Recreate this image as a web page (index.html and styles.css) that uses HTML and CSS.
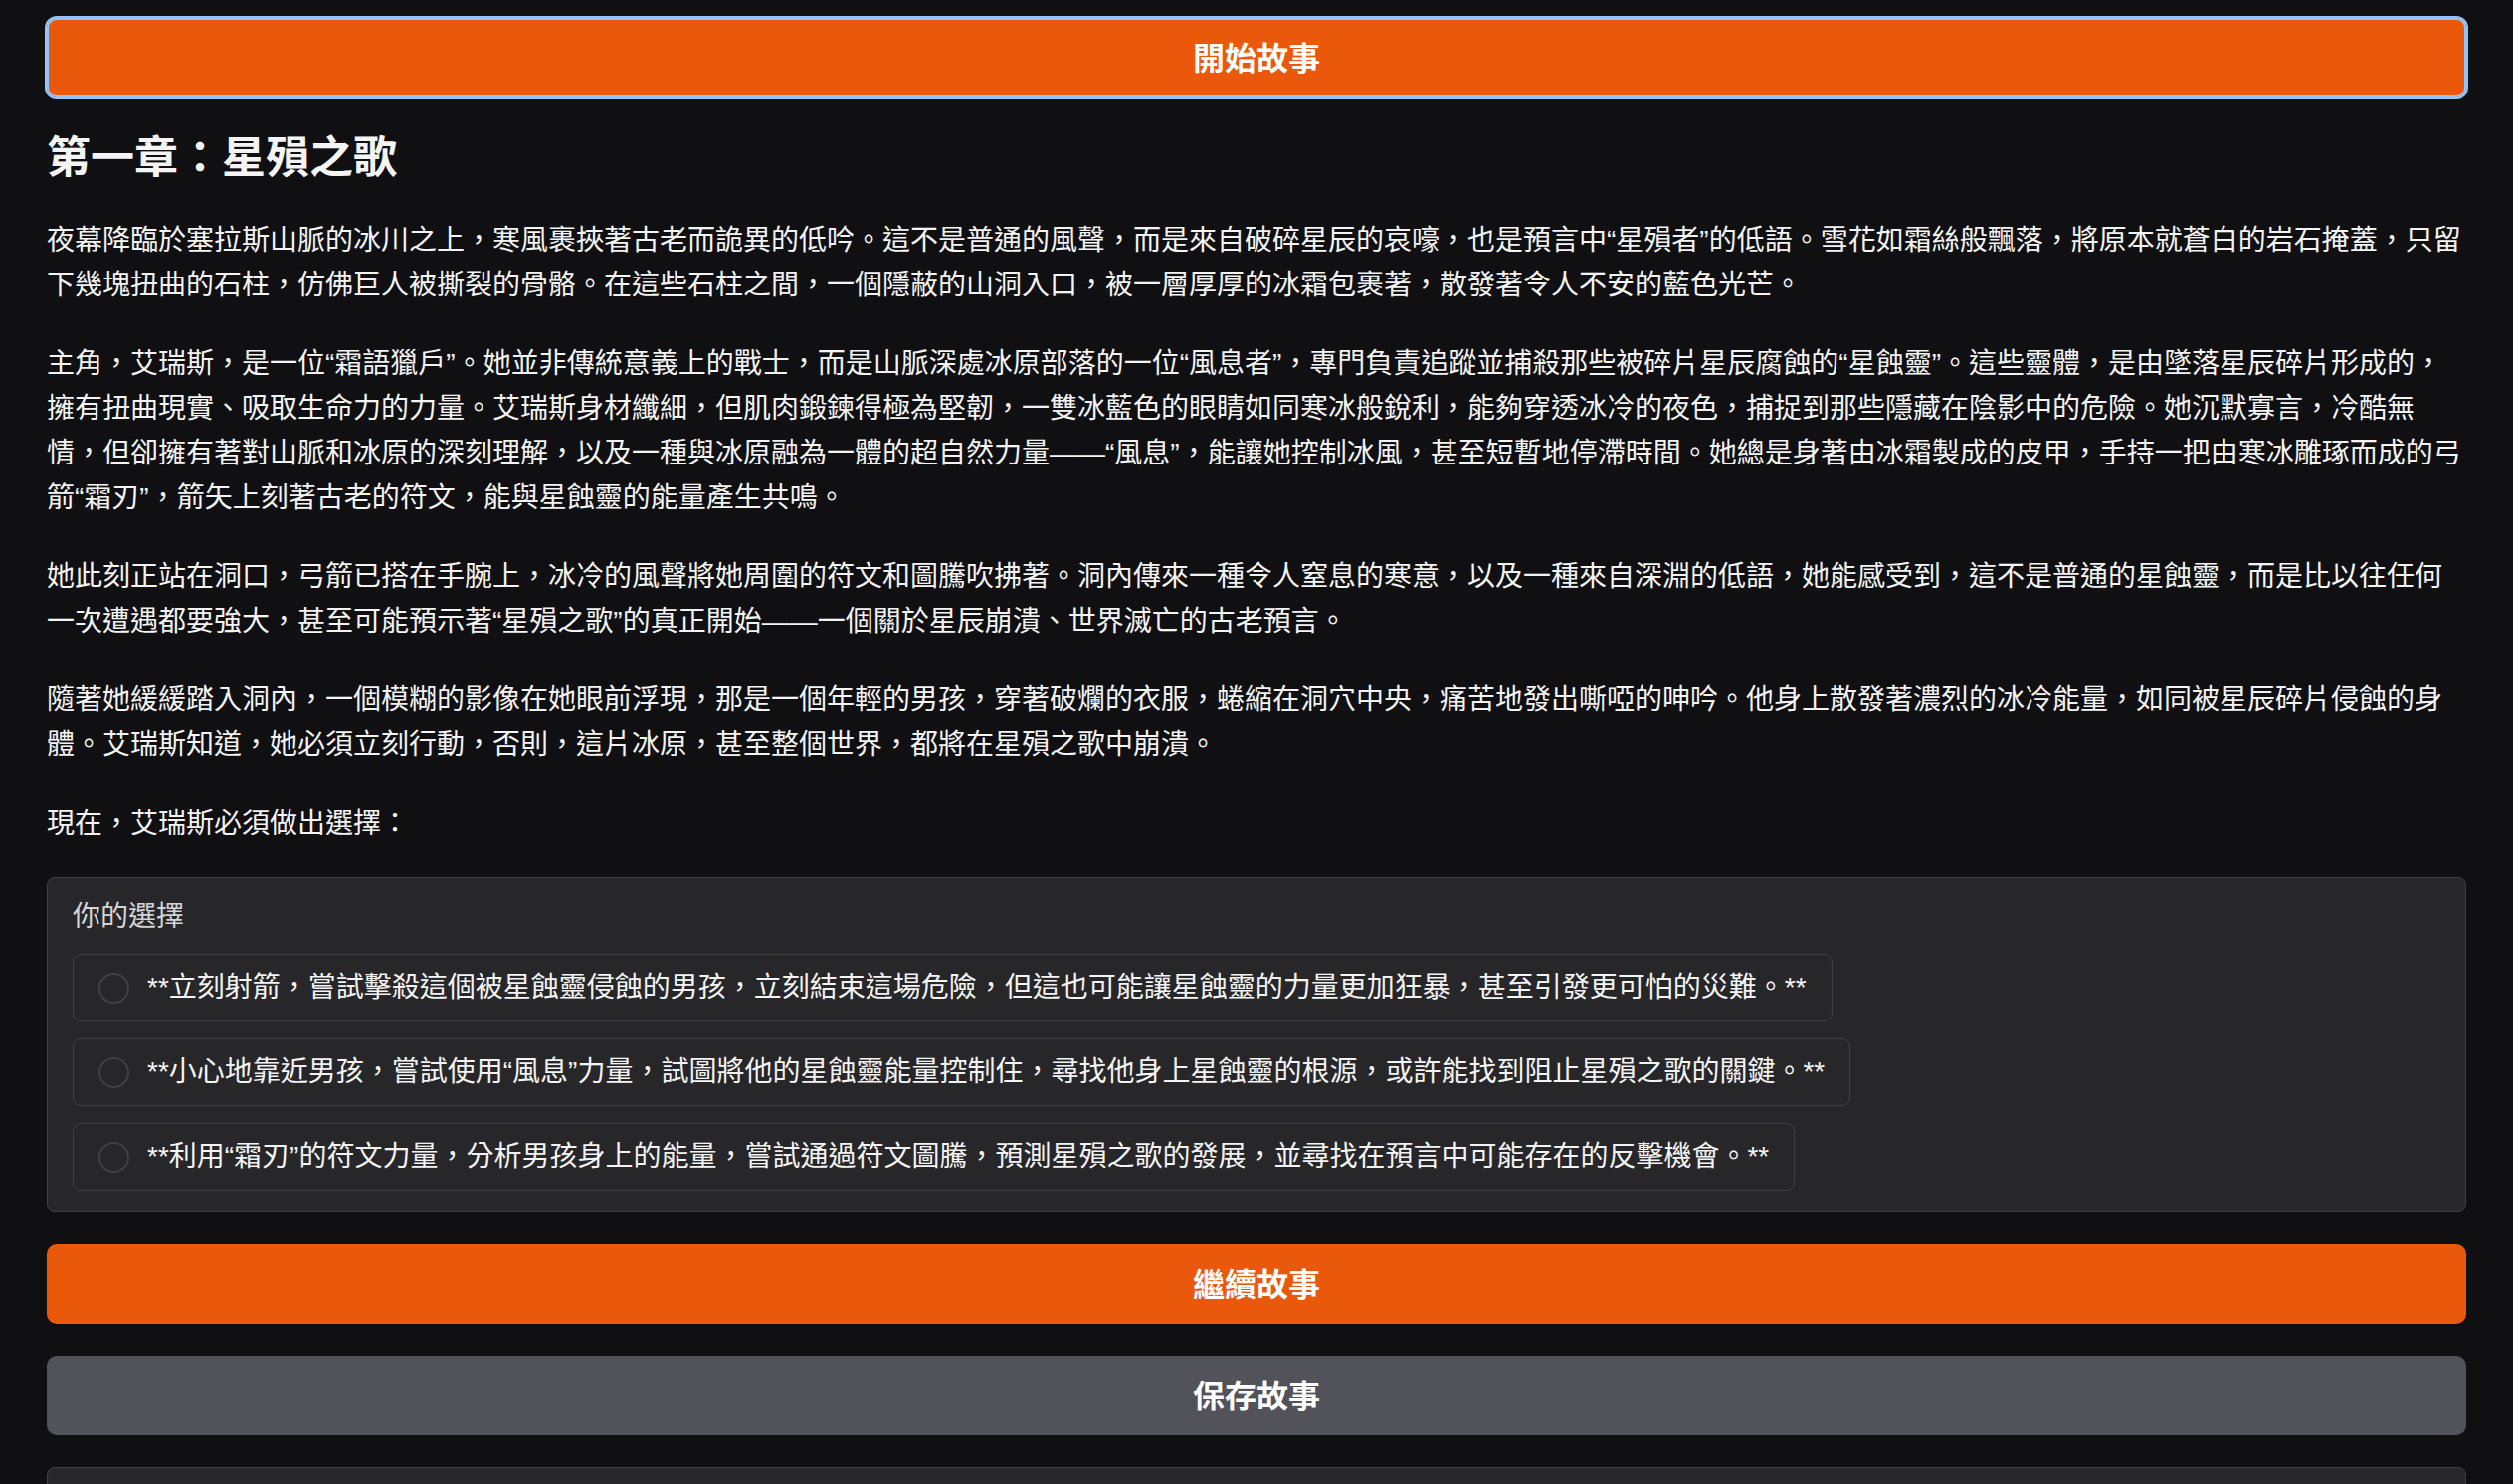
FILE: index.html
```html
<!DOCTYPE html>
<html lang="zh-Hant">
<head>
<meta charset="utf-8">
<title>星殞之歌</title>
<link rel="stylesheet" href="styles.css">
</head>
<body>
<main class="page">
  <button class="btn btn-primary btn-focus" type="button">開始故事</button>

  <article class="story">
    <h1 class="story-title">第一章：星殞之歌</h1>
    <p>夜幕降臨於塞拉斯山脈的冰川之上，寒風裹挾著古老而詭異的低吟。這不是普通的風聲，而是來自破碎星辰的哀嚎，也是預言中“星殞者”的低語。雪花如霜絲般飄落，將原本就蒼白的岩石掩蓋，只留下幾塊扭曲的石柱，仿佛巨人被撕裂的骨骼。在這些石柱之間，一個隱蔽的山洞入口，被一層厚厚的冰霜包裹著，散發著令人不安的藍色光芒。</p>
    <p>主角，艾瑞斯，是一位“霜語獵戶”。她並非傳統意義上的戰士，而是山脈深處冰原部落的一位“風息者”，專門負責追蹤並捕殺那些被碎片星辰腐蝕的“星蝕靈”。這些靈體，是由墜落星辰碎片形成的，擁有扭曲現實、吸取生命力的力量。艾瑞斯身材纖細，但肌肉鍛鍊得極為堅韌，一雙冰藍色的眼睛如同寒冰般銳利，能夠穿透冰冷的夜色，捕捉到那些隱藏在陰影中的危險。她沉默寡言，冷酷無情，但卻擁有著對山脈和冰原的深刻理解，以及一種與冰原融為一體的超自然力量——“風息”，能讓她控制冰風，甚至短暫地停滯時間。她總是身著由冰霜製成的皮甲，手持一把由寒冰雕琢而成的弓箭“霜刃”，箭矢上刻著古老的符文，能與星蝕靈的能量產生共鳴。</p>
    <p>她此刻正站在洞口，弓箭已搭在手腕上，冰冷的風聲將她周圍的符文和圖騰吹拂著。洞內傳來一種令人窒息的寒意，以及一種來自深淵的低語，她能感受到，這不是普通的星蝕靈，而是比以往任何一次遭遇都要強大，甚至可能預示著“星殞之歌”的真正開始——一個關於星辰崩潰、世界滅亡的古老預言。</p>
    <p>隨著她緩緩踏入洞內，一個模糊的影像在她眼前浮現，那是一個年輕的男孩，穿著破爛的衣服，蜷縮在洞穴中央，痛苦地發出嘶啞的呻吟。他身上散發著濃烈的冰冷能量，如同被星辰碎片侵蝕的身體。艾瑞斯知道，她必須立刻行動，否則，這片冰原，甚至整個世界，都將在星殞之歌中崩潰。</p>
    <p>現在，艾瑞斯必須做出選擇：</p>
  </article>

  <section class="choices">
    <div class="choices-label">你的選擇</div>
    <div class="choice-list">
      <label class="choice"><span class="radio"></span><span class="choice-text">**立刻射箭，嘗試擊殺這個被星蝕靈侵蝕的男孩，立刻結束這場危險，但這也可能讓星蝕靈的力量更加狂暴，甚至引發更可怕的災難。**</span></label>
      <label class="choice"><span class="radio"></span><span class="choice-text">**小心地靠近男孩，嘗試使用“風息”力量，試圖將他的星蝕靈能量控制住，尋找他身上星蝕靈的根源，或許能找到阻止星殞之歌的關鍵。**</span></label>
      <label class="choice"><span class="radio"></span><span class="choice-text">**利用“霜刃”的符文力量，分析男孩身上的能量，嘗試通過符文圖騰，預測星殞之歌的發展，並尋找在預言中可能存在的反擊機會。**</span></label>
    </div>
  </section>

  <button class="btn btn-primary" type="button">繼續故事</button>
  <button class="btn btn-secondary" type="button">保存故事</button>

  <section class="panel"></section>
</main>
</body>
</html>
```

FILE: styles.css
```css
* {
  box-sizing: border-box;
}

html, body {
  margin: 0;
  padding: 0;
  background: #101012;
}

body {
  font-family: "Liberation Sans", "Noto Sans CJK TC", sans-serif;
  color: #f4f4f5;
}

.page {
  display: flex;
  flex-direction: column;
  gap: 32px;
  padding: 18px 47px 40px 47px;
}

.page > .story {
  margin-top: 2px;
}

.btn {
  display: block;
  width: 100%;
  height: 80px;
  border: none;
  border-radius: 10px;
  font-family: "Liberation Sans", "Noto Sans CJK TC", sans-serif;
  font-size: 32px;
  font-weight: 700;
  color: #ffffff;
  cursor: pointer;
  padding: 0 0 4px 0;
}

.btn-primary {
  background: #ea580c;
}

.btn-secondary {
  background: #52525b;
}

.btn-focus {
  box-shadow: 0 0 0 2px #93c5fd, inset 0 0 0 2px #93c5fd;
}

.story {
  display: flex;
  flex-direction: column;
  gap: 34px;
}

.story-title {
  margin: 0;
  font-size: 44px;
  line-height: 53px;
  font-weight: 700;
  color: #f4f4f5;
}

.story p {
  margin: 0;
  font-size: 28px;
  line-height: 45px;
  color: #f4f4f5;
}

.choices {
  background: #27272a;
  border: 1px solid #3f3f46;
  border-radius: 8px;
  padding: 19px 25px 21px 25px;
  display: flex;
  flex-direction: column;
  gap: 17px;
}

.choices-label {
  font-size: 28px;
  line-height: 40px;
  color: #d4d4d8;
}

.choice-list {
  display: flex;
  flex-direction: column;
  align-items: flex-start;
  gap: 17px;
}

.choice {
  display: flex;
  align-items: center;
  gap: 18px;
  height: 68px;
  padding: 0 25px 0 25px;
  border: 1px solid #3f3f46;
  border-radius: 8px;
  cursor: pointer;
}

.radio {
  flex: none;
  width: 31px;
  height: 31px;
  border: 2px solid #3f3f46;
  border-radius: 50%;
}

.choice-text {
  font-size: 28px;
  line-height: 42px;
  color: #f4f4f5;
  white-space: nowrap;
}

.panel {
  height: 200px;
  background: #27272a;
  border: 1px solid #3f3f46;
  border-radius: 8px;
}
```
